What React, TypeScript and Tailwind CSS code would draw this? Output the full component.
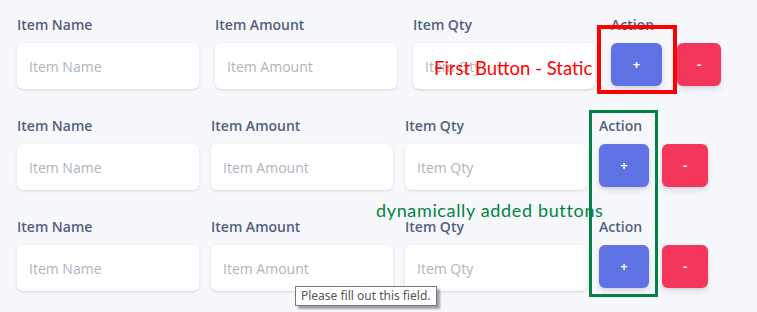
const fields = ['Item Name', 'Item Amount', 'Item Qty'];

const Field = ({ label }: { label: string }) => (
    <div className="flex w-[182px] flex-col">
        <label className="mb-2 h-5 text-[14px] leading-5 font-semibold text-[#525f7f]">{label}</label>
        <input
            placeholder={label}
            className="h-[46px] w-full rounded-md bg-white px-3 text-[14px] text-[#525f7f] shadow-[0_1px_3px_rgba(50,50,93,0.15),0_1px_0_rgba(0,0,0,0.02)] outline-none placeholder:text-[#adb5bd]"
        />
    </div>
);

const ItemRow = ({ first }: { first?: boolean }) => (
    <div className={first ? 'flex gap-4' : 'flex gap-3'}>
        {fields.map((f) => (
            <Field key={f} label={f} />
        ))}
        <div className="flex flex-col">
            <span className="mb-2 h-5 text-[14px] leading-5 font-semibold text-[#525f7f]">Action</span>
            <div className={first ? 'flex gap-[15px]' : 'flex gap-[13px]'}>
                <button
                    className={`h-[43px] ${first ? 'w-[51px]' : 'w-[50px]'} rounded-md bg-[#5e72e4] text-[13px] font-bold text-white shadow-[0_4px_6px_rgba(50,50,93,0.11),0_1px_3px_rgba(0,0,0,0.08)]`}
                >
                    +
                </button>
                <button
                    className={`h-[43px] ${first ? 'w-[44px]' : 'w-[46px]'} rounded-md bg-[#f5365c] text-[13px] font-bold text-white shadow-[0_4px_6px_rgba(50,50,93,0.11),0_1px_3px_rgba(0,0,0,0.08)]`}
                >
                    -
                </button>
            </div>
        </div>
    </div>
);

export default function App() {
    return (
        <div className="relative h-[312px] w-[757px] overflow-hidden bg-[#f6f8fb] font-['Open_Sans',sans-serif]">
            <div className="flex flex-col gap-[27px] px-[17px] pt-[15px]">
                <ItemRow first />
                <ItemRow />
                <ItemRow />
            </div>

            {/* annotations */}
            <div className="absolute top-[25px] left-[597px] h-[69px] w-[80px] border-4 border-[#ff0000]" />
            <span className="absolute top-[56px] left-[434px] font-['Lato',sans-serif] text-[18.5px] leading-6 text-[#ff0000]">
                First Button - Static
            </span>
            <div className="absolute top-[110px] left-[589px] h-[187px] w-[69px] border-[3px] border-[#00843f]" />
            <span className="absolute top-[198px] left-[376px] font-['Lato',sans-serif] text-[18px] leading-6 tracking-[0.65px] text-[#00843f]">
                dynamically added buttons
            </span>

            {/* validation tooltip */}
            <div className="absolute top-[286px] left-[295px] border border-[#767676] bg-white px-[5px] py-[1px] font-['Noto_Sans',sans-serif] text-[12px] leading-4 text-[#575757] shadow-[3px_3px_2px_rgba(0,0,0,0.35)]">
                Please fill out this field.
            </div>
        </div>
    );
}
